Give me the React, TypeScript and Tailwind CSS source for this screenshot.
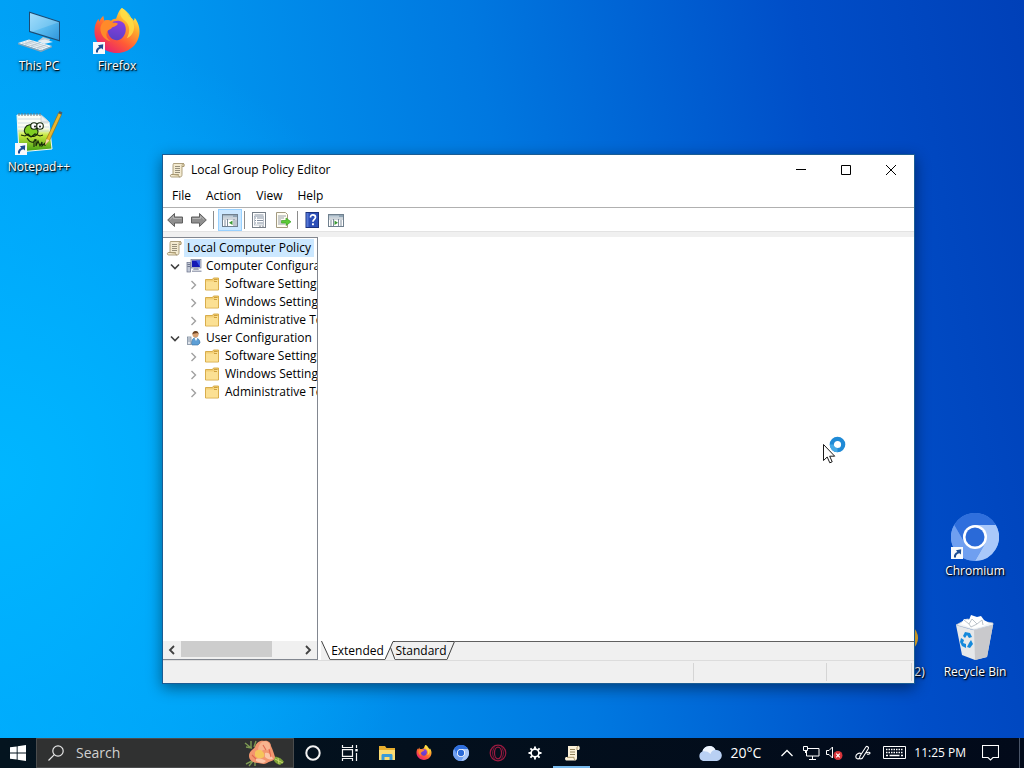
import type { ReactNode } from 'react'

type TreeNode = {
  label: string
  icon: ReactNode
  children?: TreeNode[]
}

function ShortcutBadge() {
  return (
    <svg viewBox="0 0 12 12" className="absolute bottom-0.5 left-0 h-3 w-3" aria-hidden="true">
      <rect width="12" height="12" fill="#f8fafc" />
      <path d="M3 10.5C2.6 7.6 4 5.6 6.3 5L5 3.2l5.2-1-.3 5.4-1.5-1.4C6 6.800 4.600 8 5 10.500z" fill="#1d4e94" />
    </svg>
  )
}

function ThisPcIcon() {
  return (
    <svg viewBox="0 0 48 48" className="h-12 w-12" aria-hidden="true">
      <defs>
        <linearGradient id="screen" x1="0" y1="0" x2="1" y2="1">
          <stop offset="0" stopColor="#8fd6fb" />
          <stop offset="0.5" stopColor="#5bbcf0" />
          <stop offset="1" stopColor="#2f96dc" />
        </linearGradient>
      </defs>
      <path d="M14 3.500l31 10v20L14 24z" fill="#1c4c74" />
      <path d="M15 5l29 9.300v17.700L15 23z" fill="url(#screen)" />
      <path d="M15 5l29 9.300-27 9.400-2-.7z" fill="#fff" opacity="0.18" />
      <path d="M28 29l7 2.200-1 2.800-8 .200-3-1.200z" fill="#b9cbd6" />
      <path d="M22 33l8-1.500 8 2.500-9 2z" fill="#e4edf3" />
      <path d="M3 35l11-3.500L37 38l-11 4.500z" fill="#eaf1f5" />
      <path d="M3 35l23 7.500V44L3 36.300zM26 42.500L37 38v1.300L26 44z" fill="#8ea3b2" />
      <path d="M7 34.800l20 6.400M10 33.800l20 6.200M13 32.800l20 6M10 36l9-3.200M16 38l9-3.200M22 40l9-3.200" stroke="#a8bac6" strokeWidth="0.600" />
    </svg>
  )
}

function FirefoxIcon({ className }: { className: string }) {
  return (
    <svg viewBox="0 1 48 49" className={className} aria-hidden="true">
      <defs>
        <linearGradient id="flame" x1="0.850" y1="0.100" x2="0.250" y2="0.950">
          <stop offset="0" stopColor="#fff14f" />
          <stop offset="0.300" stopColor="#ffa62b" />
          <stop offset="0.650" stopColor="#ff5a36" />
          <stop offset="1" stopColor="#e8226f" />
        </linearGradient>
        <linearGradient id="globe" x1="0.500" y1="0" x2="0.300" y2="1">
          <stop offset="0" stopColor="#8b3fe0" />
          <stop offset="1" stopColor="#5a3fc4" />
        </linearGradient>
      </defs>
      <path
        d="M29 1c4 2 6 6 7 9 4 1 5 4 5 4s1-1 1-3c4 5 5 10 5 14 0 12-10 22-23 22S1 37 1 25c0-5 1-9 4-13l1 3c1-3 3-5 4-6l1 5c2-1 5-1 7 0 2-2 4-2 5-2 2-5 3-9 6-11z"
        fill="url(#flame)"
      />
      <path d="M14 23c1-6 6-9 11-9 5 0 8 4 8 9s-4 11-9 11-9-4-10-11z" fill="url(#globe)" />
      <path d="M11 14c3-1 7 0 9 2 2 0 4 0 5 1-2 3-5 3-6 4-1 2-4 2-5 4-2 4 0 8 4 10-7-1-11-7-11-13 0-3 2-6 4-8z" fill="#ff8a2a" />
      <path d="M29 1c-3 5-2 9 3 13 5 4 6 11 2 18 7-3 10-12 5-19-1-5-4-8-10-12z" fill="#ffde45" opacity="0.850" />
    </svg>
  )
}

function NotepadIcon() {
  return (
    <svg viewBox="0 0 48 48" className="h-12 w-12" aria-hidden="true">
      <defs>
        <linearGradient id="grass" x1="0" y1="0" x2="0" y2="1">
          <stop offset="0.350" stopColor="#fbfdf5" />
          <stop offset="0.550" stopColor="#c6e83d" />
          <stop offset="1" stopColor="#3c9c12" />
        </linearGradient>
      </defs>
      <path d="M2 6h24l8 7 3 27-33 3z" fill="url(#grass)" stroke="#f2f7f3" strokeWidth="1" />
      <path d="M3 10h24M3 14h30M3 18h31M3 22h31" stroke="#b7cbd3" strokeWidth="0.600" />
      <path d="M26 6l8 7h-8z" fill="#e8eef0" stroke="#a6b1b5" strokeWidth="0.500" />
      <path d="M4 4v3M7 4v3M10 4v3M13 4v3M16 4v3M19 4v3M22 4v3M25 4v3" stroke="#6b777a" strokeWidth="1" />
      <path d="M10 19c2-4 7-4 10-2l3 5c0 6-6 6-9 5s-6-4-4-8z" fill="#7fce22" stroke="#15280a" strokeWidth="1.100" />
      <circle cx="19" cy="17" r="3.300" fill="#fff" stroke="#15280a" strokeWidth="1.100" />
      <circle cx="25" cy="17" r="3.300" fill="#fff" stroke="#15280a" strokeWidth="1.100" />
      <circle cx="20" cy="17.500" r="0.900" />
      <circle cx="25" cy="17.500" r="0.900" />
      <path d="M6 26l4 1 3-2 3 3 4-3 5 2 3-1M12 29c3 5 8 6 8 1M19 38v-6l2-1v6l2-5 2 5 2-4v4l3-3v3" fill="none" stroke="#15280a" strokeWidth="1.100" />
      <path d="M30 36l1.500-6L43.500 4l3 1.500-12 26z" fill="#e8b62f" stroke="#91640f" strokeWidth="0.600" />
      <path d="M30 36l1.500-6 3 1.500z" fill="#f4dcae" />
      <path d="M43.500 4l1-2 3 1.500-1 2z" fill="#4a5a69" />
    </svg>
  )
}

function ChromiumIcon({ className }: { className: string }) {
  return (
    <svg viewBox="0 0 48 48" className={className} aria-hidden="true">
      <circle cx="24" cy="24" r="24" fill="#5b93ea" />
      <path d="M24 12h20.800A24 24 0 0 1 24 48l10.400-18z" fill="#a9c8fa" />
      <path d="M3.200 12A24 24 0 0 1 44.800 12H24a12 12 0 0 0-10.400 18z" fill="#2f6fdd" />
      <path d="M3.200 12l10.400 18A12 12 0 0 0 34.400 30L24 48A24 24 0 0 1 3.200 12z" fill="#6f9ff0" />
      <circle cx="24" cy="24" r="12" fill="#fff" />
      <circle cx="24" cy="24" r="9.500" fill="#2a6ad8" />
    </svg>
  )
}

function RecycleBinIcon() {
  return (
    <svg viewBox="0 0 48 48" className="h-12 w-12" aria-hidden="true">
      <path d="M5 11l17 5 20-5-6 32-12 3-13-5z" fill="#e6e8ea" />
      <path d="M23 16l19-5-6 32-12 3z" fill="#c9c9cc" />
      <path d="M5 11l11-6 26 4v2l-19 5z" fill="#f1f4f6" stroke="#c5ccd2" strokeWidth="0.700" />
      <path d="M10 10l3-5 5 1 2-5 6 2 4-1 3 4 5 3-7 3.500-9 2z" fill="#fff" />
      <path d="M13 6l5 4 3-5 5 5 5-4 1 5M18 10l2 3 6-3" fill="none" stroke="#b3bcc4" strokeWidth="0.900" />
      <path d="M14 18l5 1 2 4-3 1-2-3-2 3-2-2zM10 24l3 2-1 3 3 1v4l-4-2-2-4zM20 26l2 4-3 4-3-1 2-4z" fill="#1489dc" />
    </svg>
  )
}

function YellowDiscIcon() {
  return (
    <svg viewBox="0 0 48 48" className="h-12 w-12" aria-hidden="true">
      <ellipse cx="24" cy="24" rx="21" ry="17" fill="#f5b82e" />
    </svg>
  )
}

function ScrollIcon({ className }: { className: string }) {
  return (
    <svg viewBox="0 0 16 16" className={className} aria-hidden="true">
      <path d="M4.500 1.500h10c-1.500.500-1.500 2-1.500 3v8c0 1.500-.500 2.500-2 2.500H2.500c-1.500 0-1.500-2.500 0-2.500H4V3.500c0-1 .500-2 .500-2z" fill="#f3ead0" stroke="#9a8a63" strokeWidth="0.800" />
      <path d="M13 4.500h2c.6-1.500.2-3-1-3M2.500 12.500H9.500c-.500 1 0 2.500 1.500 2.500" fill="#d9cba2" stroke="#9a8a63" strokeWidth="0.800" />
      <path d="M6 4.500h5M6 6.500h5M6 8.500h5M6 10.500h5" stroke="#8b8572" strokeWidth="0.900" />
    </svg>
  )
}

function TaskScrollIcon() {
  return (
    <svg viewBox="0 0 16 16" className="h-4 w-4" aria-hidden="true">
      <path d="M4 1h11c1 1 1 3 0 4h-2v8c0 1.500-.800 2.500-2 2.500H2C.500 14.500.800 12 2.500 12H4z" fill="#fbf1d9" />
      <path d="M13 5V3c0-1 .500-2 1.500-2M3 12.300h7c0 1.500.300 2.500 1.500 3" fill="none" stroke="#a08b5c" strokeWidth="0.900" />
      <path d="M6 4.500h5M6 7h5M6 9.500h5" stroke="#8f8158" strokeWidth="1" />
    </svg>
  )
}

function FolderIcon() {
  return (
    <svg viewBox="0 0 16 16" className="h-4 w-4 shrink-0" aria-hidden="true">
      <path d="M1.500 3.500h7l1-1.500h5v12h-13z" fill="#f3cf74" stroke="#d4a640" strokeWidth="0.900" />
      <path d="M2 5.500h8l1.500-1.500H14V13.500H2z" fill="#fbe093" />
      <path d="M10 3.500h3.500M10 5.500h3" stroke="#c99a35" strokeWidth="0.900" />
    </svg>
  )
}

function ComputerIcon() {
  return (
    <svg viewBox="0 0 16 16" className="h-4 w-4 shrink-0" aria-hidden="true">
      <rect x="5" y="1.500" width="10" height="8.500" fill="#c9cdda" stroke="#777e96" strokeWidth="0.700" />
      <rect x="6" y="2.500" width="8" height="6.500" fill="#1519b4" />
      <path d="M10 2.500h4v6.500z" fill="#3c5be6" />
      <path d="M8 10h4l1 2H7zM6 12.500h9.500v1.500H6z" fill="#a4a9ba" />
      <rect x="1" y="4.500" width="3.500" height="9.500" fill="#c3c9d6" stroke="#687089" strokeWidth="0.700" />
      <path d="M1.500 6.500h2.500M1.500 8.500h2.500" stroke="#4b5370" strokeWidth="0.700" />
    </svg>
  )
}

function UserIcon() {
  return (
    <svg viewBox="0 0 16 16" className="h-4 w-4 shrink-0" aria-hidden="true">
      <path d="M5.500 14c0-4 1.500-6 3.500-6.200 3 0 5 2.200 5 5.200l-2 2H6z" fill="#5d9fd6" stroke="#356f9f" strokeWidth="0.600" />
      <path d="M8.500 8l1.500 3 1.500-3z" fill="#fff" />
      <circle cx="9.500" cy="4.500" r="3" fill="#d8a173" />
      <path d="M6.500 4.500C6.200 2 8 .800 9.800 1c2 .200 3 1.500 2.700 3.500l-1-1.500c-2 .500-4 0-5 1.500z" fill="#6a4323" />
      <rect x="1.500" y="7" width="3.500" height="7.500" fill="#dfe5ed" stroke="#6d7c90" strokeWidth="0.700" />
      <path d="M2 9h2.500M2 11h2.500" stroke="#6d7c90" strokeWidth="0.700" />
    </svg>
  )
}

const policyFolders: TreeNode[] = [
  { label: 'Software Settings', icon: <FolderIcon /> },
  { label: 'Windows Settings', icon: <FolderIcon /> },
  { label: 'Administrative Templates', icon: <FolderIcon /> },
]

const policyTree: TreeNode[] = [
  { label: 'Computer Configuration', icon: <ComputerIcon />, children: policyFolders },
  { label: 'User Configuration', icon: <UserIcon />, children: policyFolders },
]

function DesktopItem({ label, shortcut, children }: { label: string; shortcut?: boolean; children: ReactNode }) {
  return (
    <button type="button" className="flex h-[101px] w-[78px] flex-col items-center pt-2 text-white">
      <span className="relative block h-12 w-12">
        {children}
        {shortcut && <ShortcutBadge />}
      </span>
      <span className="text-xs leading-5 whitespace-nowrap [text-shadow:1px_1px_1px_#000,0_1px_3px_#000]">{label}</span>
    </button>
  )
}

function Chevron({ open }: { open?: boolean }) {
  return (
    <svg viewBox="0 0 12 12" className="h-3 w-3 shrink-0" fill="none" aria-hidden="true">
      {open ? (
        <path d="M2 4.500l4 4 4-4" stroke="#404040" strokeWidth="1.600" />
      ) : (
        <path d="M4.500 3l4 4-4 4" stroke="#a0a0a0" strokeWidth="1.400" />
      )}
    </svg>
  )
}

function PolicyTree() {
  return (
    <div className="min-h-0 flex-1 overflow-hidden pt-px whitespace-nowrap">
      <div className="flex h-[18px] items-center gap-0.5 pl-[3px]">
        <ScrollIcon className="h-4 w-4 shrink-0" />
        <span className="bg-[#cce8ff] px-[3px] leading-[18px]">Local Computer Policy</span>
      </div>
      <ul>
        {policyTree.map((group) => (
          <li key={group.label}>
            <div className="flex h-[18px] items-center pl-1.5">
              <Chevron open />
              <span className="ml-[5px]">{group.icon}</span>
              <span className="ml-1">{group.label}</span>
            </div>
            <ul>
              {group.children?.map((child) => (
                <li key={child.label} className="flex h-[18px] items-center pl-6">
                  <Chevron />
                  <span className="ml-[5px]">{child.icon}</span>
                  <span className="ml-[5px]">{child.label}</span>
                </li>
              ))}
            </ul>
          </li>
        ))}
      </ul>
    </div>
  )
}

function TreeScrollbar() {
  return (
    <div className="flex h-[18px] items-center bg-[#f0f0f0]">
      <button type="button" aria-label="Scroll left" className="flex h-full w-[18px] items-center justify-center">
        <svg viewBox="0 0 10 10" className="h-2.5 w-2.5" aria-hidden="true">
          <path d="M7 1L3 5l4 4" fill="none" stroke="#404040" strokeWidth="1.800" />
        </svg>
      </button>
      <div className="h-full flex-1">
        <div className="h-4 w-[77%] bg-[#cdcdcd]" />
      </div>
      <button type="button" aria-label="Scroll right" className="flex h-full w-[18px] items-center justify-center">
        <svg viewBox="0 0 10 10" className="h-2.5 w-2.5" aria-hidden="true">
          <path d="M3 1l4 4-4 4" fill="none" stroke="#404040" strokeWidth="1.800" />
        </svg>
      </button>
    </div>
  )
}

function ArrowIcon({ flip }: { flip?: boolean }) {
  return (
    <svg viewBox="0 0 16 16" className={flip ? 'h-4 w-4 -scale-x-100' : 'h-4 w-4'} aria-hidden="true">
      <path d="M.700 8L7.500 1.500v3.500h8v6h-8v3.500z" fill="#8f8f8f" stroke="#5f5f5f" strokeWidth="1" />
      <path d="M3 7.500l3.500-3.300V6.500h8" fill="none" stroke="#b9b9b9" strokeWidth="0.900" />
    </svg>
  )
}

function PaneIcon({ flip }: { flip?: boolean }) {
  return (
    <svg viewBox="0 0 16 16" className="h-4 w-4" aria-hidden="true">
      <rect x="0.500" y="2.500" width="15" height="12" fill="#fff" stroke="#70808e" />
      <path d="M1 3h14v2.500H1z" fill="#8fa3b3" />
      <path d="M1 4.200h10" stroke="#e9eff3" strokeWidth="0.800" />
      <path d="M1 7h14" stroke="#8897a4" strokeWidth="0.800" />
      {flip ? (
        <path d="M5.500 7v7.500M10.500 7v7.500M2 9h2M2 11h2M2 13h2M12 9h2M12 11h2M12 13h2" stroke="#70808e" strokeWidth="0.900" />
      ) : (
        <path d="M5.500 7v7.500M12 7v7.500M2 9h2M2 11h2M2 13h2M13 9h2M13 11h2M13 13h2" stroke="#70808e" strokeWidth="0.900" />
      )}
      {flip ? <path d="M6.500 8.500l3.500 2.300-3.500 2.200z" fill="#3a9a34" /> : <path d="M10.500 8.500L7 10.800l3.500 2.200z" fill="#3a9a34" />}
    </svg>
  )
}

function PropertiesIcon() {
  return (
    <svg viewBox="0 0 16 16" className="h-4 w-4" aria-hidden="true">
      <rect x="1.500" y="0.500" width="13" height="15" fill="#fff" stroke="#777f88" />
      <path d="M3.500 3h9M4 6h1M4 8.500h1M4 11h1M6 6h6M6 8.500h6M6 11h6" stroke="#8490a0" />
      <rect x="3.500" y="4.500" width="9" height="8.500" fill="none" stroke="#a4aebb" strokeWidth="0.700" />
      <path d="M8 14.200h2M11 14.200h2" stroke="#777f88" strokeWidth="0.800" />
    </svg>
  )
}

function ExportIcon() {
  return (
    <svg viewBox="0 0 16 16" className="h-4 w-4" aria-hidden="true">
      <path d="M1.500.500h9l2 2v13h-11z" fill="#fffdf2" stroke="#a39a80" />
      <path d="M3 4h8M3 6h6M3 8h3M3 10h3M3 12h7" stroke="#9aa0a8" />
      <path d="M6.500 8.500h4.500V6L16 9.800l-5 3.700v-2.500H6.500z" fill="#5ccb36" stroke="#3a9d22" strokeWidth="0.700" />
    </svg>
  )
}

function HelpIcon() {
  return (
    <svg viewBox="0 0 16 16" className="h-4 w-4" aria-hidden="true">
      <rect x="2" y="0.500" width="12.500" height="15" fill="#2c4fb8" stroke="#1b327d" />
      <path d="M2.500 1h2v14h-2z" fill="#5577d4" />
      <path d="M6.500 5.500c0-1.900 1.200-2.700 2.400-2.700 1.600 0 2.600.9 2.600 2.400 0 2-2.600 2.300-2.600 4.600" fill="none" stroke="#fff" strokeWidth="1.700" />
      <rect x="8" y="11.300" width="1.900" height="1.900" fill="#fff" />
    </svg>
  )
}

function ToolButton({ label, active, children }: { label: string; active?: boolean; children: ReactNode }) {
  return (
    <button
      type="button"
      aria-label={label}
      aria-pressed={active}
      className={
        active
          ? 'flex h-[22px] w-6 items-center justify-center border border-[#99d1ff] bg-[#cce8ff]'
          : 'flex h-[22px] w-6 items-center justify-center'
      }
    >
      {children}
    </button>
  )
}

function Separator() {
  return <span className="mx-0.5 h-[18px] w-px bg-[#8c8c8c]" />
}

function Toolbar() {
  return (
    <div className="flex h-6 items-center border-b border-[#e3e3e3] pt-px">
      <ToolButton label="Back"><ArrowIcon /></ToolButton>
      <ToolButton label="Forward"><ArrowIcon flip /></ToolButton>
      <Separator />
      <span className="w-0.5" />
      <ToolButton label="Show/Hide Console Tree" active><PaneIcon /></ToolButton>
      <Separator />
      <ToolButton label="Properties"><PropertiesIcon /></ToolButton>
      <ToolButton label="Export List"><ExportIcon /></ToolButton>
      <Separator />
      <ToolButton label="Help"><HelpIcon /></ToolButton>
      <ToolButton label="Show/Hide Action Pane"><PaneIcon flip /></ToolButton>
    </div>
  )
}

function ViewTabs() {
  return (
    <div role="tablist" className="flex h-[19px] bg-[#f0f0f0]">
      <span className="w-[3px] bg-white" />
      <svg viewBox="0 0 9 19" className="h-[19px] w-[9px]" fill="none" aria-hidden="true">
        <path d="M0 0h9v18.500z" fill="#fff" />
        <path d="M.500 0l8.500 18.500" stroke="#404040" />
      </svg>
      <button type="button" role="tab" aria-selected="true" className="w-[55px] border-b border-[#606060] bg-white pt-px leading-[17px]">
        Extended
      </button>
      <svg viewBox="0 0 10 19" className="h-[19px] w-2.5" fill="none" aria-hidden="true">
        <path d="M0 0h8L0 18.500z" fill="#fff" />
        <path d="M0 18.500L8 .500h2M5.500 6.500l4.500 12" stroke="#404040" />
      </svg>
      <button type="button" role="tab" aria-selected="false" className="w-[52px] border-y border-[#606060] leading-[17px]">
        Standard
      </button>
      <svg viewBox="0 0 8 19" className="h-[19px] w-2" fill="none" aria-hidden="true">
        <path d="M0 18.500L7.500.500H0" stroke="#404040" />
      </svg>
      <span className="flex-1 border-t border-[#606060]" />
    </div>
  )
}

function PolicyWindow() {
  return (
    <section
      aria-label="Local Group Policy Editor"
      className="absolute top-[154px] right-[109px] bottom-[54px] left-[162px] flex flex-col border border-[#1a5c94] bg-white text-xs text-black shadow-[0_4px_14px_rgba(0,0,0,0.45)]"
    >
      <header className="flex h-[30px] items-center pl-1.5">
        <ScrollIcon className="h-4 w-4" />
        <h1 className="ml-1.5 flex-1">Local Group Policy Editor</h1>
        <button type="button" aria-label="Minimize" className="flex h-full w-[45px] items-center justify-center">
          <svg viewBox="0 0 10 10" className="h-2.5 w-2.5" aria-hidden="true">
            <path d="M0 4.500h10" stroke="#000" />
          </svg>
        </button>
        <button type="button" aria-label="Maximize" className="flex h-full w-[45px] items-center justify-center">
          <svg viewBox="0 0 10 10" className="h-2.5 w-2.5" aria-hidden="true">
            <path d="M.500.500h9v9h-9z" fill="none" stroke="#000" />
          </svg>
        </button>
        <button type="button" aria-label="Close" className="flex h-full w-[46px] items-center justify-center">
          <svg viewBox="0 0 10 10" className="h-2.5 w-2.5" aria-hidden="true">
            <path d="M0 0l10 10M10 0L0 10" stroke="#000" />
          </svg>
        </button>
      </header>
      <nav className="flex h-[23px] items-center gap-[15px] border-b border-[#b0b0b0] pl-[9px]">
        <button type="button">File</button>
        <button type="button">Action</button>
        <button type="button">View</button>
        <button type="button">Help</button>
      </nav>
      <Toolbar />
      <div className="h-[5px] shrink-0 bg-[#f0f0f0]" />
      <div className="flex min-h-0 flex-1">
        <aside className="flex w-[155px] flex-col border-t border-r border-b border-[#828790]">
          <PolicyTree />
          <TreeScrollbar />
        </aside>
        <main className="flex min-w-0 flex-1 flex-col">
          <div className="flex-1 bg-white" />
          <ViewTabs />
        </main>
      </div>
      <footer className="flex h-[23px] justify-end border-t border-[#dcdcdc] bg-[#f0f0f0] py-0.5">
        <span className="w-[133px] border-l border-[#d5d5d5]" />
        <span className="mr-0.5 w-[86px] border-x border-[#d5d5d5]" />
      </footer>
    </section>
  )
}

function BusyCursor() {
  return (
    <svg viewBox="0 0 24 28" className="pointer-events-none absolute top-[436px] left-[823px] h-7 w-6" aria-hidden="true">
      <circle cx="14.500" cy="8.500" r="5.700" fill="#fff" stroke="#1f8ad6" strokeWidth="4.200" />
      <path d="M8.800 8.500a5.700 5.700 0 0 0 5.700 5.700" fill="none" stroke="#45a9e6" strokeWidth="4.200" />
      <path d="M.500 8.500v16l3.700-3.500 2.600 5.800 2.400-1-2.500-5.600h5z" fill="#fff" stroke="#000" strokeWidth="0.900" />
    </svg>
  )
}

function CoralPicture() {
  return (
    <svg viewBox="0 0 44 28" className="h-7 w-11" aria-hidden="true">
      <path d="M2 4l5 4M3 8l6 1M8 2v6M13 2l-2 6M3 25l6-3M6 27l4-5M12 27v-6" stroke="#7d9a52" strokeWidth="1.400" />
      <path d="M30 18c5-1 9 2 11 5l-4 3c-4-1-7-4-7-8z" fill="#7fa238" />
      <path d="M32 20l8 4M35 19l1 6" stroke="#c9d96c" />
      <path d="M6 17c0-5 4-6 6-9 1-4 5-7 9-6 4-1 7 2 7 5 2 4 3 8 4 11 0 4-5 4-8 6-4 2-6 0-9 0-5 0-9-3-9-7z" fill="#f3966f" />
      <path d="M19 3c4-2 8 1 8 4 1 4-1 5-4 4s-4 2-7 2c-2-3 0-8 3-10z" fill="#f8b48f" />
      <path d="M12 13c2-3 6-3 8 0 2 2 2 5-1 6s-5 0-7-2z" fill="#f5c65a" />
      <path d="M22 14c4-1 6 1 8 6-3 1-6 0-8-2zM13 20c4-1 7 0 10 2-2 3-6 2-10 0z" fill="#fbc5a8" />
      <path d="M20 6l3 5M26 10l2 8M9 16l4 4" stroke="#e2694f" strokeWidth="1.100" />
    </svg>
  )
}

function ExplorerIcon() {
  return (
    <svg viewBox="0 0 18 18" className="h-[18px] w-[18px]" aria-hidden="true">
      <path d="M1 2h6l1.500 2H17v12H1z" fill="#e7ae2e" />
      <path d="M1 6h16v10H1z" fill="#fbdc74" />
      <path d="M3.500 16v-4.500c0-1 .500-1.500 1.500-1.500h8c1 0 1.500.500 1.500 1.500V16h-3v-3h-5v3z" fill="#3a9bd8" />
    </svg>
  )
}

function TaskViewIcon() {
  return (
    <svg viewBox="0 0 18 18" className="h-[18px] w-[18px]" fill="none" stroke="#f4f4f4" strokeWidth="1.200" aria-hidden="true">
      <path d="M1.500 1v2.500h10V1M1.500 17v-2.500h10V17M1.500 5.600h10v6.800h-10zM15.500 1v3M15.500 9v8" />
      <path d="M14.300 5h2.400v2.400h-2.400z" fill="#fff" stroke="none" />
    </svg>
  )
}

function OperaIcon() {
  return (
    <svg viewBox="0 0 18 18" className="h-[18px] w-[18px]" fill="none" stroke="#9c1a40" aria-hidden="true">
      <circle cx="9" cy="9" r="7.800" strokeWidth="1.200" />
      <ellipse cx="9" cy="9" rx="3.500" ry="5.800" strokeWidth="1.200" />
      <path d="M5.500 3.500c-2.500 3-2.500 8 0 11M12.500 3.500c2.500 3 2.500 8 0 11" strokeWidth="0.800" />
    </svg>
  )
}

function SettingsIcon() {
  return (
    <svg viewBox="0 0 16 16" className="h-4 w-4" fill="none" stroke="#fff" aria-hidden="true">
      <circle cx="8" cy="8" r="3.900" strokeWidth="1.700" />
      <path d="M8 1.500v2.600M8 11.900v2.600M1.500 8h2.600M11.900 8h2.600M3.400 3.400l1.800 1.800M10.800 10.800l1.800 1.800M3.400 12.600l1.800-1.800M10.800 5.200l1.800-1.800" strokeWidth="1.900" />
    </svg>
  )
}

function TaskButton({ label, active, children }: { label: string; active?: boolean; children: ReactNode }) {
  return (
    <button
      type="button"
      aria-label={label}
      className={
        active
          ? 'flex w-[37px] items-center justify-center border-b-2 border-[#76b9ed] pt-0.5'
          : 'flex w-[37px] items-center justify-center'
      }
    >
      {children}
    </button>
  )
}

function SystemTray() {
  return (
    <div className="ml-auto flex items-center text-white">
      <button type="button" className="flex items-center gap-2 text-sm">
        <svg viewBox="0 0 24 16" className="h-4 w-6" aria-hidden="true">
          <path d="M5 16a5 5 0 0 1-.600-9.400A7 7 0 0 1 17.500 5 5.500 5.500 0 0 1 19 16z" fill="#b9d0f3" />
          <path d="M4.400 6.600A7 7 0 0 1 17.500 5c-3 0-4.500 2-5 4C10 6.500 7 6 4.400 6.600z" fill="#eef4fd" />
        </svg>
        20°C
      </button>
      <button type="button" aria-label="Show hidden icons" className="ml-5">
        <svg viewBox="0 0 12 8" className="h-2 w-3" aria-hidden="true">
          <path d="M.500 7L6 1.500 11.500 7" fill="none" stroke="#fff" strokeWidth="1.300" />
        </svg>
      </button>
      <button type="button" aria-label="Network" className="ml-2.5">
        <svg viewBox="0 0 17 16" className="h-4 w-[17px]" fill="none" stroke="#fff" aria-hidden="true">
          <path d="M5 3.500h11v7.500H3.500V6M9.500 11v3.500M6 14.500h7M.500 1.500h4v4h-4zM2.500 5.500V8" />
        </svg>
      </button>
      <button type="button" aria-label="Volume muted" className="ml-1.5">
        <svg viewBox="0 0 17 16" className="h-4 w-[17px]" aria-hidden="true">
          <path d="M.500 5.500h2.500L6.500 2v11L3 9.500H.500z" fill="none" stroke="#fff" />
          <circle cx="12" cy="10.500" r="4.500" fill="#d8343a" />
          <path d="M10.200 8.700l3.600 3.600M13.800 8.700l-3.600 3.600" stroke="#fff" strokeWidth="1.200" />
        </svg>
      </button>
      <button type="button" aria-label="Windows Ink" className="ml-3">
        <svg viewBox="0 0 16 16" className="h-4 w-4" fill="none" stroke="#fff" strokeWidth="1.100" aria-hidden="true">
          <path d="M5 11L11 1.800c1-1 3 .300 2.400 1.700L7.500 13c-1 1-2.500 1-3 .500zM6 8.500C4 7.500 1 9 .800 11.500c-.200 2.500 2.700 3 4.200 1.500M11 8c2-1 4-1 4 0s-1.500 1.500-3 1" />
        </svg>
      </button>
      <button type="button" aria-label="Touch keyboard" className="ml-3">
        <svg viewBox="0 0 23 14" className="h-3.5 w-[23px]" fill="none" stroke="#fff" aria-hidden="true">
          <path d="M.500.500h22v12H.500z" />
          <path d="M3 3.500h17M3 6.500h17" strokeDasharray="1.500 1" strokeWidth="1.400" />
          <path d="M3 9.500h2M6.500 9.500h10M18 9.500h2" strokeWidth="1.300" />
        </svg>
      </button>
      <time className="ml-2 text-xs">11:25 PM</time>
      <button type="button" aria-label="Notifications" className="ml-4">
        <svg viewBox="0 0 17 16" className="h-4 w-[17px]" fill="none" stroke="#fff" strokeWidth="1.100" aria-hidden="true">
          <path d="M.500.500h16v12h-5.500l-2.500 2.500-2.500-2.500H.500z" />
        </svg>
      </button>
      <button type="button" aria-label="Show desktop" className="ml-5 h-[30px] w-[5px] border-l border-[#4a5568]" />
    </div>
  )
}

function Taskbar() {
  return (
    <footer className="flex h-[30px] bg-gradient-to-r from-[#04141f] to-[#020a1a]">
      <button type="button" aria-label="Start" className="flex w-9 items-center justify-center">
        <svg viewBox="0 0 16 16" className="h-4 w-4" fill="#fff" aria-hidden="true">
          <path d="M0 2.300l6.700-.900v6.100H0zM7.600 1.200L16 0v7.500H7.600zM0 8.400h6.700v6.200L0 13.700zM7.600 8.400H16V16l-8.400-1.200z" />
        </svg>
      </button>
      <label className="flex w-[258px] items-center border border-[#4a4c4d] bg-[#303131] pl-[11px]">
        <svg viewBox="0 0 16 16" className="h-4 w-4 shrink-0" fill="none" stroke="#e6e6e6" strokeWidth="1.200" aria-hidden="true">
          <circle cx="10" cy="6" r="5.200" />
          <path d="M6.300 9.700L.500 15.500" />
        </svg>
        <input
          type="text"
          aria-label="Search"
          placeholder="Search"
          className="ml-3 min-w-0 flex-1 bg-transparent text-sm text-white outline-none placeholder:text-[#d0d0d0]"
        />
        <span className="mr-1.5"><CoralPicture /></span>
      </label>
      <TaskButton label="Cortana">
        <svg viewBox="0 0 16 16" className="h-4 w-4" aria-hidden="true">
          <circle cx="8" cy="8" r="6.700" fill="none" stroke="#f2f2f2" strokeWidth="2" />
        </svg>
      </TaskButton>
      <TaskButton label="Task View"><TaskViewIcon /></TaskButton>
      <TaskButton label="File Explorer"><ExplorerIcon /></TaskButton>
      <TaskButton label="Firefox"><FirefoxIcon className="h-4 w-4" /></TaskButton>
      <TaskButton label="Chromium"><ChromiumIcon className="h-4 w-4" /></TaskButton>
      <TaskButton label="Opera"><OperaIcon /></TaskButton>
      <TaskButton label="Settings"><SettingsIcon /></TaskButton>
      <TaskButton label="Local Group Policy Editor" active><TaskScrollIcon /></TaskButton>
      <SystemTray />
    </footer>
  )
}

export default function App() {
  return (
    <div className="flex h-screen flex-col overflow-hidden bg-[radial-gradient(ellipse_45%_60%_at_0%_62%,#00b6ff_0%,#00b0ff99_50%,transparent_100%),linear-gradient(80deg,#00a8fa_0%,#009bf2_22%,#0078e0_52%,#004ec8_80%,#0040b8_100%)] font-['Open_Sans','Noto_Sans',sans-serif]">
      <div className="relative flex min-h-0 flex-1 justify-between">
        <div className="flex items-start">
          <div className="flex flex-col">
            <DesktopItem label="This PC"><ThisPcIcon /></DesktopItem>
            <DesktopItem label="Notepad++" shortcut><NotepadIcon /></DesktopItem>
          </div>
          <DesktopItem label="Firefox" shortcut><FirefoxIcon className="h-12 w-12" /></DesktopItem>
        </div>
        <div className="flex items-end pr-2.5 pb-[31px]">
          <DesktopItem label="Firefox (2)"><YellowDiscIcon /></DesktopItem>
          <div className="flex flex-col">
            <DesktopItem label="Chromium" shortcut><ChromiumIcon className="h-12 w-12" /></DesktopItem>
            <DesktopItem label="Recycle Bin"><RecycleBinIcon /></DesktopItem>
          </div>
        </div>
        <PolicyWindow />
        <BusyCursor />
      </div>
      <Taskbar />
    </div>
  )
}
